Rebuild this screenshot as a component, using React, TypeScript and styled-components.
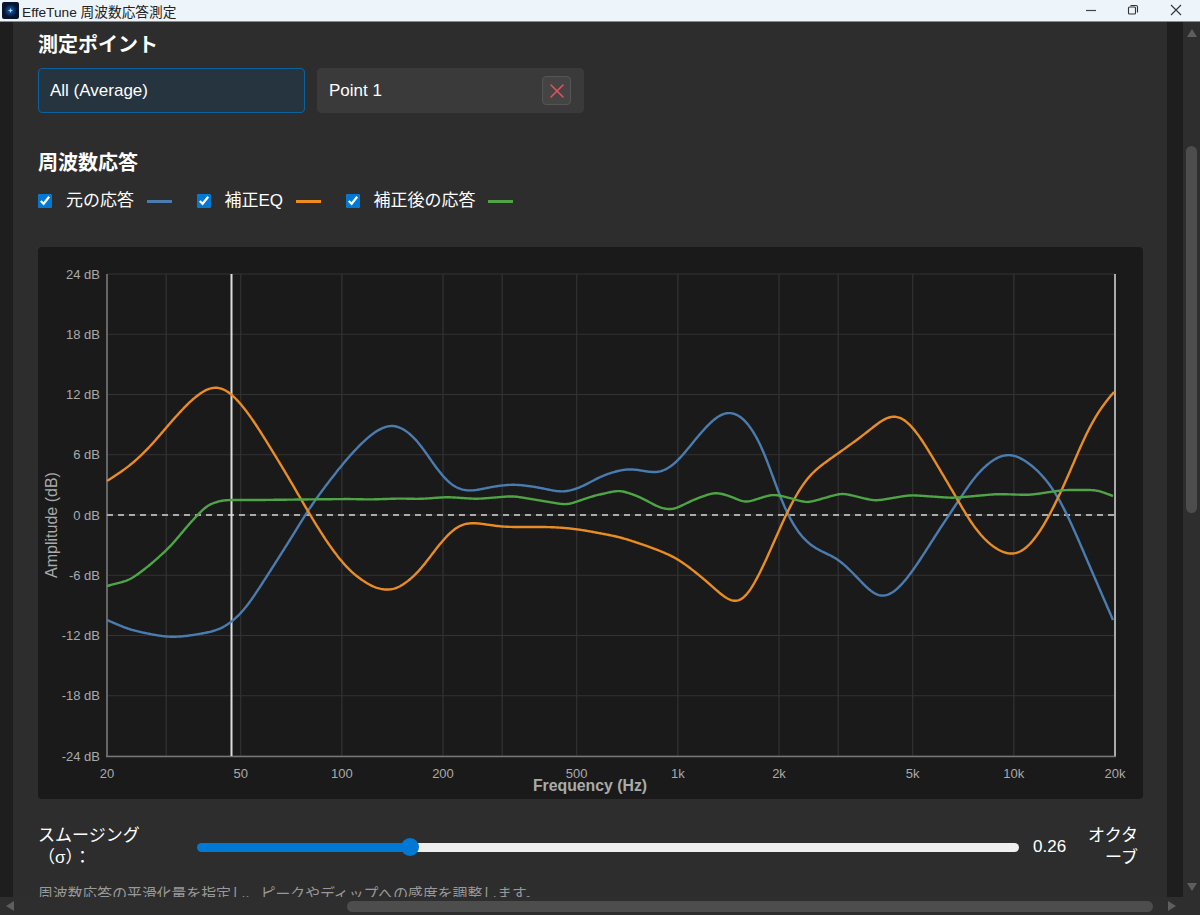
import React from "react";
import styled, { createGlobalStyle } from "styled-components";
import { X } from "lucide-react";

const FONT = `"Liberation Sans", "Noto Sans CJK JP", Arial, sans-serif`;

const Global = createGlobalStyle`
  html, body { margin: 0; padding: 0; height: 100%; overflow: hidden; background: #2d2d2d; }
  #root { height: 100%; }
  * { box-sizing: border-box; }
`;

const Window = styled.div`
  width: 1200px; height: 915px; display: flex; flex-direction: column;
  font-family: ${FONT}; color: #fff; background: #2d2d2d; overflow: hidden;
`;
const TitleBar = styled.header`
  height: 22px; flex: none; display: flex; align-items: center; padding-left: 2px;
  background: #eef5fa; border-bottom: 1px solid #8a8d90; color: #222; font-size: 13.7px;
`;
const TitleText = styled.span`margin-left: 3px; flex: 1; white-space: nowrap;`;
const WinButton = styled.span`
  width: 42.5px; height: 19px; display: flex; align-items: center; justify-content: center;
`;
const WinControls = styled.div`display: flex; margin-right: 3px; align-self: flex-start;`;
const Middle = styled.div`flex: 1; min-height: 0; display: flex;`;
const Gutter = styled.div<{ $w: number }>`width: ${p => p.$w}px; flex: none; background: #1e1e1e;`;
const Content = styled.main`
  flex: 1; min-width: 0; overflow: hidden; background: #2d2d2d; padding: 11px 24px 0 25px;
`;
const Heading = styled.h2<{ $mt?: number }>`
  margin: ${p => p.$mt ?? 0}px 0 0; font-size: 20px; line-height: 24px; font-weight: 700; color: #fff;
`;
const Points = styled.div`display: flex; gap: 12px; margin-top: 11px;`;
const Point = styled.div<{ $active?: boolean }>`
  width: 267px; height: 45px; display: flex; align-items: center; justify-content: space-between;
  padding: 0 12px 0 11px; border-radius: 4px; font-size: 17px;
  background: ${p => (p.$active ? "#263440" : "#3a3a3a")};
  border: 1px solid ${p => (p.$active ? "#0a639e" : "#3a3a3a")};
`;
const DeleteButton = styled.button`
  width: 29px; height: 29px; padding: 0; display: flex; align-items: center; justify-content: center;
  background: #444; border: 1px solid #555; border-radius: 4px; color: #e8505b;
`;
const Legend = styled.div`display: flex; align-items: center; height: 22px; margin-top: 15px;`;
const LegendItem = styled.label`
  display: flex; align-items: center; font-size: 17px; line-height: 22px; margin-right: 25px; color: #fff;
`;
const Check = styled.input`
  width: 14px; height: 14px; margin: 0 14px 0 0; accent-color: #0078d4; flex: none;
`;
const Swatch = styled.span<{ $c: string }>`
  width: 25px; height: 3px; margin-left: 12.5px; background: ${p => p.$c}; flex: none;
`;
const ChartCard = styled.section`
  width: 1105px; height: 552px; margin-top: 35px; background: #1a1a1a; border-radius: 4px; overflow: hidden;
`;
const ChartSvg = styled.svg`display: block; width: 100%; height: 100%;`;
const SliderRow = styled.div`display: flex; align-items: center; margin-top: 26px; height: 44px;`;
const SliderLabel = styled.label`
  width: 102px; flex: none; font-size: 17px; line-height: 22px; color: #fff;
`;
const Range = styled.input`
  -webkit-appearance: none; appearance: none; flex: none; width: 822px; height: 18px; margin: 0 0 0 57px;
  background: transparent;
  &::-webkit-slider-runnable-track {
    height: 9px; border-radius: 5px;
    background: linear-gradient(to right, #0078d4 0 212px, #efefef 212px 100%);
  }
  &::-webkit-slider-thumb {
    -webkit-appearance: none; width: 18px; height: 18px; margin-top: -4.5px; border-radius: 50%;
    background: #0078d4; border: none;
  }
`;
const Value = styled.span`width: 34px; margin-left: 14px; flex: none; font-size: 17px; color: #fff;`;
const Unit = styled.span`
  width: 51px; margin-left: 20px; flex: none; font-size: 17px; line-height: 22px; text-align: right; color: #fff;
`;
const Note = styled.p`margin: 15px 0 0; font-size: 14.85px; line-height: 20px; color: #999; white-space: nowrap;`;
const VBar = styled.aside`
  width: 17px; flex: none; background: #2e2e2e; display: flex; flex-direction: column; align-items: center;
  padding: 5px 0 4px;
`;
const VThumb = styled.div`width: 11px; height: 367px; margin-top: 109px; background: #4d4d4d; border-radius: 6px; flex: none;`;
const Spacer = styled.div`flex: 1;`;
const HBar = styled.footer`
  height: 18px; flex: none; background: #2e2e2e; display: flex; align-items: center; padding: 0 22px 0 5px;
`;
const HThumb = styled.div`width: 806px; height: 11px; margin-left: 332px; background: #4d4d4d; border-radius: 6px; flex: none;`;

const Tri = ({ d }: { d: "u" | "d" | "l" | "r" }) => {
  const pts = { u: "0,10 5,2 10,10", d: "0,0 10,0 5,8", l: "9,0 9,10 1,5", r: "0,0 8,5 0,10" }[d];
  return <svg width="10" height="10" viewBox="0 0 10 10"><polygon points={pts} fill="#5e5e5e" /></svg>;
};

const Logo = () => (
  <svg width="17" height="17" viewBox="0 0 17 17">
    <defs>
      <radialGradient id="lg">
        <stop offset="0" stopColor="#6fb6ff" />
        <stop offset="0.3" stopColor="#0a4f9e" />
        <stop offset="1" stopColor="#07142e" />
      </radialGradient>
    </defs>
    <rect width="17" height="17" rx="2" fill="#07142e" />
    <circle cx="8.5" cy="8.5" r="6.5" fill="url(#lg)" />
    <path d="M8.5 6.5v4M6.5 8.5h4" stroke="#bfe0ff" strokeWidth="0.8" />
  </svg>
);

type P = [number, number];
// Resample the traced curve by x, then apply a gaussian so it reads as a smoothed response.
// Ends use an odd reflection, which keeps the end points and the slope there.
const smooth = (pts: P[], sigma = 8) => {
  const x0 = pts[0][0], x1 = pts[pts.length - 1][0];
  const ys: number[] = [];
  let j = 0;
  for (let x = x0; x <= x1; x += 1) {
    while (j < pts.length - 2 && pts[j + 1][0] < x) j++;
    const t = (x - pts[j][0]) / (pts[j + 1][0] - pts[j][0]);
    ys.push(pts[j][1] + t * (pts[j + 1][1] - pts[j][1]));
  }
  const n = ys.length;
  const at = (q: number) => (q < 0 ? 2 * ys[0] - ys[-q] : q >= n ? 2 * ys[n - 1] - ys[2 * (n - 1) - q] : ys[q]);
  const r = Math.ceil(sigma * 3);
  const out = ys.map((_, i) => {
    let s = 0, w = 0;
    for (let k = -r; k <= r; k++) {
      const g = Math.exp(-(k * k) / (2 * sigma * sigma));
      s += g * at(i + k); w += g;
    }
    return s / w;
  });
  return "M" + out.map((y, i) => `${x0 + i} ${y.toFixed(2)}`).join("L");
};

const orange: P[] = [[107,481],[130,466],[150,447],[170,423],[190,401],[205,389],[217,385],[231,392],[250,415],[270,447],[290,480],[310,515],[330,547],[350,572],[375,589],[395,591],[410,580],[420,571],[440,543],[457,525],[470,522],[503,527],[553,527],[577,529],[620,537],[653,548],[677,558],[703,578],[727,600],[737,605],[748,597],[758,577],[770,552],[783,520],[800,487],[813,471],[840,452],[850,445],[870,430],[885,417],[897,414],[907,420],[920,436],[940,470],[955,495],[970,522],[985,541],[1000,552],[1013,556],[1025,551],[1040,533],[1055,505],[1070,472],[1085,435],[1100,408],[1114,392]];
const blue: P[] = [[107,620],[130,630],[165,637],[180,637],[200,634],[220,630],[231,623],[245,610],[260,587],[290,540],[310,507],[330,480],[350,455],[373,432],[392,423],[407,430],[420,443],[437,470],[453,488],[470,492],[490,487],[513,484],[537,487],[563,493],[580,488],[603,475],[628,468],[660,474],[677,463],[697,437],[717,415],[732,410],[747,420],[763,447],[783,507],[800,537],[817,550],[838,558],[857,577],[873,595],[885,599],[900,588],[917,565],[937,533],[957,503],[977,473],[997,456],[1012,453],[1030,463],[1050,483],[1067,513],[1087,560],[1113,620]];
const green: P[] = [[107,586],[130,580],[150,565],[170,547],[190,523],[207,505],[223,500],[260,500],[300,499.5],[350,499],[370,499.5],[400,498.5],[420,499],[447,497],[477,499],[513,496],[543,501],[567,505],[593,496],[620,490],[640,497],[660,508],[673,510],[693,500],[715,492],[730,496],[745,503],[773,494],[790,498],[807,503],[842,493],[875,501],[910,495],[953,498],[997,494],[1030,495],[1063,490],[1097,490],[1113,496]];

const xTicks: [number, string][] = [[20,"20"],[30,""],[50,"50"],[100,"100"],[200,"200"],[300,""],[500,"500"],[1000,"1k"],[2000,"2k"],[3000,""],[5000,"5k"],[10000,"10k"],[20000,"20k"]];
const fx = (f: number) => 107 + (Math.log10(f / 20) * 1008) / 3;
const yTicks = [24, 18, 12, 6, 0, -6, -12, -18, -24];
const fy = (db: number) => 515 - (db * 482) / 48;

const Chart = () => (
  <ChartSvg viewBox="38 247 1105 552" fontFamily={FONT}>
    {yTicks.map(t => <line key={t} x1={107} x2={1115} y1={fy(t)} y2={fy(t)} stroke="#333" strokeWidth="1.2" />)}
    {xTicks.map(([f]) => <line key={f} x1={fx(f)} x2={fx(f)} y1={274} y2={756} stroke="#333" strokeWidth="1.2" />)}
    <line x1={107} x2={107} y1={274} y2={757} stroke="#777" strokeWidth="1.6" />
    <line x1={106} x2={1116} y1={756.5} y2={756.5} stroke="#777" strokeWidth="1.6" />
    <line x1={107} x2={1115} y1={515} y2={515} stroke="#aaa" strokeWidth="2" strokeDasharray="6 5" />
    <line x1={231.5} x2={231.5} y1={274} y2={756} stroke="#ddd" strokeWidth="2" />
    <line x1={1115} x2={1115} y1={274} y2={756} stroke="#aaa" strokeWidth="2" />
    <path d={smooth(blue)} fill="none" stroke="#4a7cb0" strokeWidth="2.4" />
    <path d={smooth(orange)} fill="none" stroke="#e88c25" strokeWidth="2.4" />
    <path d={smooth(green, 5)} fill="none" stroke="#4fa546" strokeWidth="2.4" />
    {yTicks.map(t => (
      <text key={t} x={100} y={fy(t) + 4.5} textAnchor="end" fontSize="13" fill="#aaa">{t} dB</text>
    ))}
    {xTicks.filter(t => t[1]).map(([f, l]) => (
      <text key={f} x={fx(f)} y={778} textAnchor="middle" fontSize="13" fill="#aaa">{l}</text>
    ))}
    <text x={590} y={791} textAnchor="middle" fontSize="15.8" fontWeight="700" fill="#aaa">Frequency (Hz)</text>
    <text transform="translate(57 525) rotate(-90)" textAnchor="middle" fontSize="16" fill="#aaa">Amplitude (dB)</text>
  </ChartSvg>
);

export default function App() {
  return (
    <Window>
      <Global />
      <TitleBar>
        <Logo />
        <TitleText>EffeTune 周波数応答測定</TitleText>
        <WinControls>
          <WinButton>
            <svg width="12" height="12" viewBox="0 0 12 12"><path d="M1 6.5h10" stroke="#444" strokeWidth="1.2" /></svg>
          </WinButton>
          <WinButton>
            <svg width="12" height="12" viewBox="0 0 12 12" fill="none" stroke="#333" strokeWidth="1.1">
              <rect x="1.5" y="3" width="7" height="7" rx="1" />
              <path d="M3.5 1.5h5.5a1.5 1.5 0 0 1 1.5 1.5v5.5" />
            </svg>
          </WinButton>
          <WinButton>
            <svg width="12" height="12" viewBox="0 0 12 12"><path d="M1 1l10 10M11 1L1 11" stroke="#333" strokeWidth="1.1" /></svg>
          </WinButton>
        </WinControls>
      </TitleBar>
      <Middle>
        <Gutter $w={13} />
        <Content>
          <Heading>測定ポイント</Heading>
          <Points>
            <Point $active>All (Average)</Point>
            <Point>
              Point 1
              <DeleteButton aria-label="削除"><X size={24} strokeWidth={1.5} /></DeleteButton>
            </Point>
          </Points>
          <Heading $mt={38}>周波数応答</Heading>
          <Legend>
            <LegendItem><Check type="checkbox" defaultChecked />元の応答<Swatch $c="#4a7cb0" /></LegendItem>
            <LegendItem><Check type="checkbox" defaultChecked />補正EQ<Swatch $c="#f08c1e" /></LegendItem>
            <LegendItem><Check type="checkbox" defaultChecked />補正後の応答<Swatch $c="#4fa546" /></LegendItem>
          </Legend>
          <ChartCard><Chart /></ChartCard>
          <SliderRow>
            <SliderLabel>スムージング（σ）：</SliderLabel>
            <Range type="range" min={0} max={1.025} step="any" defaultValue={0.26} />
            <Value>0.26</Value>
            <Unit>オクターブ</Unit>
          </SliderRow>
          <Note>周波数応答の平滑化量を指定し、ピークやディップへの感度を調整します。</Note>
        </Content>
        <Gutter $w={16} />
        <VBar>
          <Tri d="u" />
          <VThumb />
          <Spacer />
          <Tri d="d" />
        </VBar>
      </Middle>
      <HBar>
        <Tri d="l" />
        <HThumb />
        <Spacer />
        <Tri d="r" />
      </HBar>
    </Window>
  );
}
